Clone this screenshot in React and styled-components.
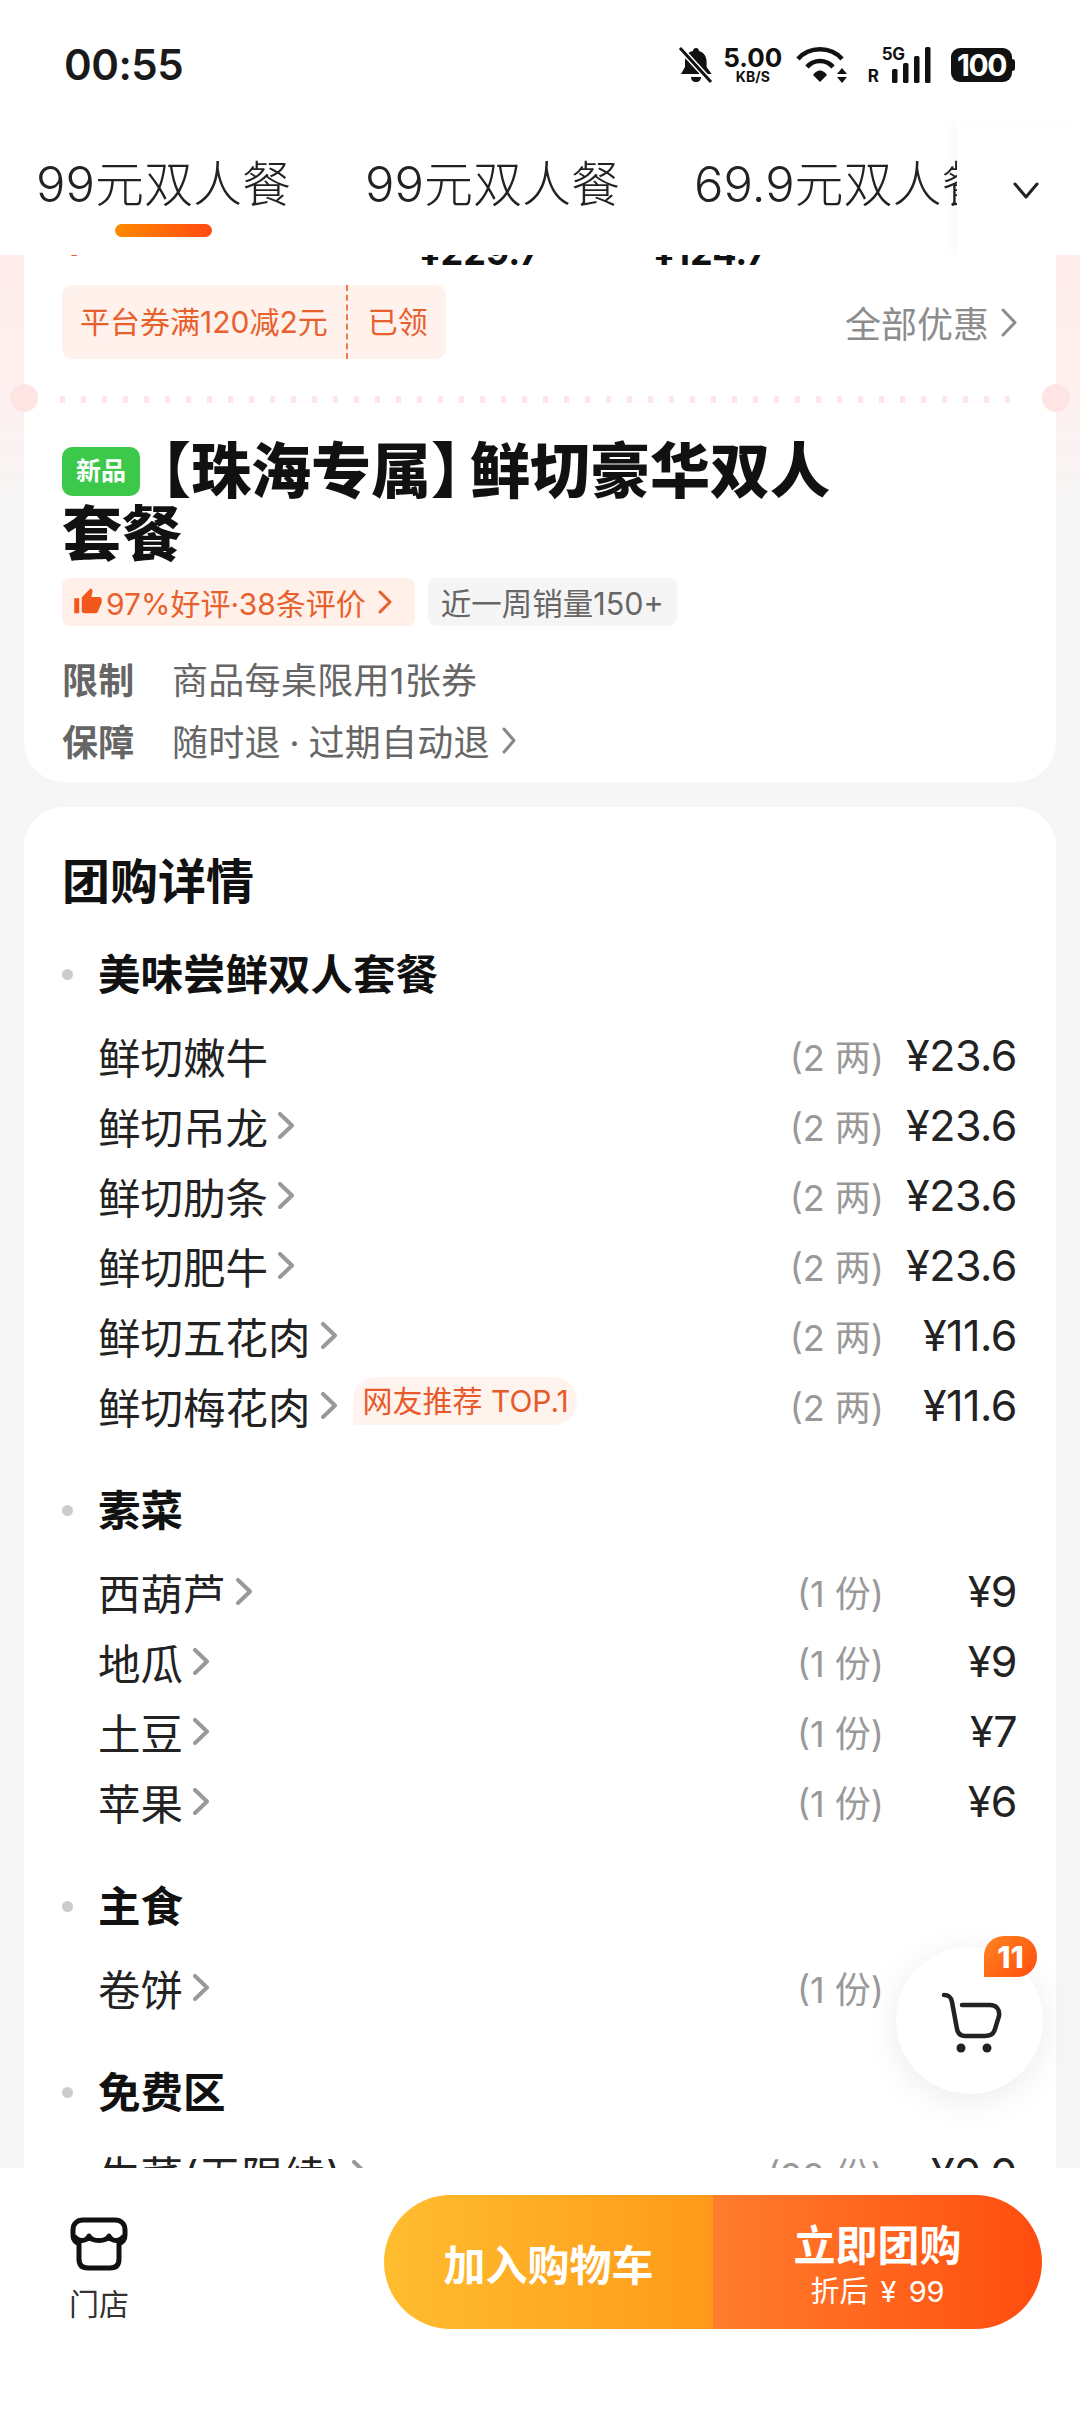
import React from 'react';
import styled, { createGlobalStyle } from 'styled-components';
import { MdThumbUp } from 'react-icons/md';

const GlobalStyle = createGlobalStyle`
  html, body {
    margin: 0;
    padding: 0;
    background: #f6f6f6;
  }
  * {
    box-sizing: border-box;
  }
`;

const Page = styled.div`
  position: relative;
  width: 1080px;
  height: 2414px;
  display: flex;
  flex-direction: column;
  overflow: hidden;
  background: #f6f6f6;
  color: #1a1a1a;
  font-family: Inter, "Noto Sans CJK SC", sans-serif;
`;

const Header = styled.header`
  flex: none;
  height: 255px;
  background: #fff;
`;

const StatusBar = styled.div`
  height: 122px;
  padding: 40px 68px 0 64px;
  display: flex;
  justify-content: space-between;
  align-items: flex-start;
`;

const Time = styled.div`
  font-weight: 600;
  font-size: 42px;
  line-height: 50px;
  letter-spacing: -0.5px;
`;

const StatusIcons = styled.div`
  height: 50px;
  display: flex;
  align-items: center;
  color: #111;
`;

const Speed = styled.div`
  width: 60px;
  margin: 0 13px 0 10px;
  display: flex;
  flex-direction: column;
  align-items: center;
  font-weight: 700;
`;

const SpeedValue = styled.span`
  font-size: 26px;
  line-height: 24px;
`;

const SpeedUnit = styled.span`
  font-size: 14px;
  line-height: 14px;
`;

const NetGroup = styled.div`
  position: relative;
  height: 36px;
  margin: 0 20px;
  display: flex;
  align-items: flex-end;
  gap: 13px;
  font-weight: 700;
`;

const RoamLabel = styled.span`
  font-size: 17px;
  line-height: 14px;
`;

const NetLabel = styled.span`
  position: absolute;
  left: 14px;
  top: 0;
  font-size: 17px;
  line-height: 15px;
  letter-spacing: -0.5px;
`;

const Battery = styled.div`
  position: relative;
  width: 61px;
  height: 34px;
  border-radius: 9px;
  background: #111;
  color: #fff;
  display: flex;
  align-items: center;
  justify-content: center;
  font-weight: 700;
  font-size: 30px;
  letter-spacing: -1.5px;

  &::after {
    content: "";
    position: absolute;
    right: -3px;
    top: 11px;
    width: 3px;
    height: 12px;
    border-radius: 0 3px 3px 0;
    background: #111;
  }
`;

const TabRow = styled.div`
  height: 133px;
  display: flex;
`;

const TabList = styled.div`
  flex: 1;
  min-width: 0;
  padding: 28px 0 0 36px;
  display: flex;
  gap: 74px;
  overflow: hidden;
`;

const Tab = styled.div`
  flex: none;
  display: flex;
  flex-direction: column;
  align-items: center;
  font-size: 49px;
  line-height: 70px;
  font-weight: 300;
  color: #222;
`;

const TabMarker = styled.div`
  width: 97px;
  height: 13px;
  margin-top: 4px;
  border-radius: 7px;
  background: linear-gradient(90deg, #ff8a00, #ff4a10);
`;

const TabMore = styled.div`
  flex: none;
  width: 123px;
  display: flex;
  align-items: center;
  justify-content: center;
  padding: 3px 0 0 14px;
  background: #fff;
  box-shadow: -6px 0 10px rgba(0, 0, 0, 0.025);
`;

const Main = styled.main`
  flex: 1;
  min-height: 0;
  padding: 0 24px;
  overflow: hidden;
  background: linear-gradient(180deg, #ffecec 0, #fff0f0 130px, #f6f6f6 262px);
`;

const DealCard = styled.section`
  position: relative;
  height: 527px;
  padding: 0 38px;
  background: #fff;
  border-radius: 0 0 40px 40px;
`;

const ClippedPrices = styled.div`
  height: 10px;
  overflow: hidden;
  display: flex;
  align-items: flex-end;
  padding-left: 2px;
  font-size: 36px;
  font-weight: 700;
`;

const ClippedPrice = styled.span`
  flex: none;
  width: ${p => p.$width}px;
  line-height: 20px;
  margin-bottom: ${p => p.$lift}px;
  color: ${p => p.$color || '#111'};
`;

const CouponRow = styled.div`
  margin-top: 20px;
  display: flex;
  align-items: center;
  justify-content: space-between;
  padding-right: 1px;
`;

const Coupon = styled.div`
  height: 74px;
  display: flex;
  align-items: stretch;
  border-radius: 10px;
  background: #fff1ec;
  color: #e8602c;
  font-size: 30px;
  line-height: 74px;
`;

const CouponText = styled.span`
  padding: 0 18px;
`;

const CouponState = styled.span`
  padding: 0 18px 0 20px;
  border-left: 2px dashed #ee7a4c;
`;

const AllOffers = styled.div`
  display: flex;
  align-items: center;
  gap: 12px;
  font-size: 36px;
  color: #8c8c8c;
`;

const Perforation = styled.div`
  height: 7px;
  margin: 37px -2px 0;
  background: repeating-linear-gradient(90deg, #ffe6e6 0 5px, transparent 5px 21px);
`;

const Notch = styled.div`
  position: absolute;
  top: 129px;
  ${p => p.$side}: -14px;
  width: 28px;
  height: 28px;
  border-radius: 50%;
  background: #ffe4e4;
`;

const Title = styled.h1`
  width: 800px;
  margin: 37px 0 0;
  font-size: 60px;
  line-height: 63px;
  font-weight: 900;
  color: #111;
`;

const OpenBracket = styled.span`
  margin-left: -9px;
`;

const CloseBracket = styled.span`
  margin-right: -21px;
`;

const NewBadge = styled.span`
  display: inline-flex;
  align-items: center;
  justify-content: center;
  width: 78px;
  height: 49px;
  border-radius: 10px;
  background: #3cc94b;
  color: #fff;
  font-size: 25px;
  line-height: 49px;
  font-weight: 700;
  vertical-align: 13px;
`;

const TagRow = styled.div`
  margin-top: 12px;
  display: flex;
  gap: 13px;
`;

const RatingTag = styled.div`
  height: 48px;
  padding: 0 23px 0 11px;
  display: flex;
  align-items: center;
  border-radius: 8px;
  background: #fff1ea;
  color: #e8602c;
  font-size: 30px;
`;

const ThumbWrap = styled.span`
  display: flex;
  margin-right: 3px;
`;

const SalesTag = styled.div`
  height: 48px;
  padding: 0 13px;
  display: flex;
  align-items: center;
  border-radius: 8px;
  background: #f5f5f5;
  color: #666;
  font-size: 30.5px;
`;

const TagArrow = styled.span`
  display: flex;
  margin-left: 12px;
`;

const InfoList = styled.div`
  margin-top: 21px;
`;

const InfoRow = styled.div`
  display: flex;
  align-items: center;
  height: 62px;
  font-size: 36px;
  letter-spacing: 0.3px;
  color: #666;
`;

const InfoLabel = styled.span`
  width: 110px;
  font-weight: 700;
  color: #666;
`;

const InfoLink = styled.span`
  display: flex;
  align-items: center;
  gap: 12px;
  word-spacing: -2px;
`;

const DetailCard = styled.section`
  margin-top: 25px;
  padding: 45px 39px 0 38px;
  background: #fff;
  border-radius: 40px 40px 0 0;
`;

const DetailTitle = styled.h2`
  margin: 0 0 32px;
  font-size: 48px;
  line-height: 60px;
  font-weight: 700;
  color: #111;
`;

const Group = styled.div`
  margin-bottom: 40px;
`;

const GroupTitle = styled.h3`
  position: relative;
  margin: 0 0 15px;
  padding: 1px 0 0 36px;
  font-size: 42.5px;
  line-height: 60px;
  font-weight: 700;
  color: #111;

  &::before {
    content: "";
    position: absolute;
    left: 0;
    top: 25px;
    width: 11px;
    height: 11px;
    border-radius: 50%;
    background: #ccc;
  }
`;

const ItemRow = styled.div`
  height: 70px;
  padding-left: 36px;
  display: grid;
  grid-template-columns: 1fr auto 133px;
  align-items: center;
`;

const ItemName = styled.div`
  display: flex;
  align-items: center;
  font-size: 42.5px;
  color: #222;
`;

const ItemArrow = styled.span`
  display: flex;
  margin-left: 10px;
`;

const ItemBadge = styled.span`
  height: 48px;
  margin: -8px 0 0 16px;
  padding: 0 8px 0 10px;
  border-radius: 24px 24px 24px 0;
  background: #fff3ee;
  color: #e85a2c;
  font-size: 30px;
  line-height: 48px;
`;

const ItemQty = styled.span`
  font-size: 36px;
  color: #999;
`;

const ItemPrice = styled.span`
  text-align: right;
  font-size: 43px;
  color: #222;
  letter-spacing: -0.5px;
`;

const CartFab = styled.div`
  position: absolute;
  left: 896px;
  top: 1947px;
  width: 147px;
  height: 147px;
  display: flex;
  align-items: center;
  justify-content: center;
  border-radius: 50%;
  background: #fff;
  box-shadow: 0 6px 36px rgba(0, 0, 0, 0.08);
`;

const CartBadge = styled.span`
  position: absolute;
  left: 88px;
  top: -11px;
  width: 53px;
  height: 41px;
  display: flex;
  align-items: center;
  justify-content: center;
  border-radius: 20px 20px 20px 0;
  background: linear-gradient(135deg, #ff8420, #ff4d0f);
  color: #fff;
  font-size: 30px;
  font-weight: 800;
`;

const Footer = styled.footer`
  position: relative;
  flex: none;
  height: 246px;
  padding: 27px 38px 0 66px;
  display: flex;
  justify-content: space-between;
  align-items: flex-start;
  background: #fff;
`;

const StoreLink = styled.div`
  margin-top: 22px;
  width: 66px;
  display: flex;
  flex-direction: column;
  align-items: center;
  gap: 15px;
  font-size: 30px;
  line-height: 36px;
  color: #333;
`;

const BuyGroup = styled.div`
  width: 658px;
  height: 134px;
  display: flex;
  border-radius: 67px;
  overflow: hidden;
  color: #fff;
`;

const AddButton = styled.div`
  flex: 1;
  display: flex;
  align-items: center;
  justify-content: center;
  background: linear-gradient(90deg, #ffbd2e, #ff9a1a);
  font-size: 42px;
  font-weight: 700;
`;

const BuyButton = styled.div`
  flex: 1;
  display: flex;
  flex-direction: column;
  align-items: center;
  justify-content: center;
  padding-top: 5px;
  background: linear-gradient(90deg, #ff7d2c, #ff4d0f);
`;

const BuyLabel = styled.span`
  font-size: 42px;
  line-height: 54px;
  font-weight: 700;
`;

const BuySub = styled.span`
  font-size: 29px;
  line-height: 38px;
  word-spacing: 4px;
`;

const Chevron = ({ w = 16, h = 27, color = '#999', stroke = 4 }) => (
  <svg width={w} height={h} viewBox={`0 0 ${w} ${h}`} fill="none">
    <path
      d={`M2 2 L${w - 2} ${h / 2} L2 ${h - 2}`}
      stroke={color}
      strokeWidth={stroke}
      strokeLinecap="round"
      strokeLinejoin="round"
    />
  </svg>
);

const ChevronDown = () => (
  <svg width="26" height="17" viewBox="0 0 26 17" fill="none">
    <path d="M2 2 L13 15 L24 2" stroke="#222" strokeWidth="3" strokeLinecap="round" strokeLinejoin="round" />
  </svg>
);

const BellOff = () => (
  <svg width="35" height="36" viewBox="0 0 35 36">
    <path
      d="M18 1c1.600 0 3 1.300 3 3 5 1.400 7.600 5.600 7.600 11v5l5 7H3l4-7v-5c0-2 .4-4 1-5.500L8 8c2-2 4-3.400 7-4 0-1.700 1.400-3 3-3z"
      fill="#111"
    />
    <path d="M13 30h10c0 3-2 5-5 5s-5-2-5-5z" fill="#111" />
    <path d="M2 1l31 34" stroke="#fff" strokeWidth="6" />
    <path d="M2 1l31 34" stroke="#111" strokeWidth="3" />
  </svg>
);

const Wifi = () => (
  <svg width="52" height="36" viewBox="0 0 52 36" fill="none">
    <path d="M2 12C13 -1 35 -1 46 12" stroke="#111" strokeWidth="4.500" />
    <path d="M11 20C18 12 30 12 37 20" stroke="#111" strokeWidth="4.500" />
    <path d="M17 28C21 22 27 22 31 28L24 35Z" fill="#111" />
    <path d="M46 21l5 6H41zM46 36l5-6H41z" fill="#111" />
  </svg>
);

const SignalBars = () => (
  <svg width="39" height="36" viewBox="0 0 39 36">
    <rect x="0" y="22" width="5.500" height="14" rx="1.500" fill="#111" />
    <rect x="11" y="16" width="5.500" height="20" rx="1.500" fill="#111" />
    <rect x="22" y="9" width="5.500" height="27" rx="1.500" fill="#111" />
    <rect x="33" y="0" width="5.500" height="36" rx="1.500" fill="#111" />
  </svg>
);

const StoreIcon = () => (
  <svg width="58" height="54" viewBox="0 0 58 54" fill="none" stroke="#111" strokeWidth="5">
    <path d="M13 3h32c6 0 10 4 10 10v5c0 4-2 7-6 9v15c0 6-3 9-9 9H18c-6 0-9-3-9-9V27c-4-2-6-5-6-9v-5C3 7 7 3 13 3z" />
    <path d="M4 19c4 6 12 6 15 0 3 6 17 6 20 0 3 6 11 6 15 0" strokeLinejoin="round" />
  </svg>
);

const CartIcon = () => (
  <svg width="66" height="66" viewBox="0 0 66 66" fill="none">
    <path
      d="M7 7C12 7 14 9 15 14L20 41C21 46 24 48 28 48H48C54 48 57 45 58 41L62 28C63 21 59 17 53 17H25"
      stroke="#222"
      strokeWidth="4.500"
      strokeLinecap="round"
    />
    <circle cx="24" cy="60" r="4.500" fill="#222" />
    <circle cx="50" cy="60" r="4.500" fill="#222" />
  </svg>
);

const groups = [
  {
    title: '美味尝鲜双人套餐',
    items: [
      { name: '鲜切嫩牛', qty: '(2 两)', price: '¥23.6', plain: true },
      { name: '鲜切吊龙', qty: '(2 两)', price: '¥23.6' },
      { name: '鲜切肋条', qty: '(2 两)', price: '¥23.6' },
      { name: '鲜切肥牛', qty: '(2 两)', price: '¥23.6' },
      { name: '鲜切五花肉', qty: '(2 两)', price: '¥11.6' },
      { name: '鲜切梅花肉', qty: '(2 两)', price: '¥11.6', badge: '网友推荐 TOP.1' },
    ],
  },
  {
    title: '素菜',
    items: [
      { name: '西葫芦', qty: '(1 份)', price: '¥9' },
      { name: '地瓜', qty: '(1 份)', price: '¥9' },
      { name: '土豆', qty: '(1 份)', price: '¥7' },
      { name: '苹果', qty: '(1 份)', price: '¥6' },
    ],
  },
  {
    title: '主食',
    items: [{ name: '卷饼', qty: '(1 份)', price: '¥5' }],
  },
  {
    title: '免费区',
    items: [{ name: '生菜(无限续)', qty: '(99 份)', price: '¥0.0' }],
  },
];

export default function App() {
  return (
    <Page>
      <GlobalStyle />
      <Header>
        <StatusBar>
          <Time>00:55</Time>
          <StatusIcons>
            <BellOff />
            <Speed>
              <SpeedValue>5.00</SpeedValue>
              <SpeedUnit>KB/S</SpeedUnit>
            </Speed>
            <Wifi />
            <NetGroup>
              <RoamLabel>R</RoamLabel>
              <NetLabel>5G</NetLabel>
              <SignalBars />
            </NetGroup>
            <Battery>100</Battery>
          </StatusIcons>
        </StatusBar>
        <TabRow>
          <TabList>
            <Tab>
              99元双人餐
              <TabMarker />
            </Tab>
            <Tab>99元双人餐</Tab>
            <Tab>69.9元双人餐</Tab>
          </TabList>
          <TabMore>
            <ChevronDown />
          </TabMore>
        </TabRow>
      </Header>

      <Main>
        <DealCard>
          <ClippedPrices>
            <ClippedPrice $width={356} $lift={12} $color="#e8602c">¥</ClippedPrice>
            <ClippedPrice $width={234} $lift={3}>¥229.7</ClippedPrice>
            <ClippedPrice $width={120} $lift={3}>¥124.7</ClippedPrice>
          </ClippedPrices>
          <CouponRow>
            <Coupon>
              <CouponText>平台券满120减2元</CouponText>
              <CouponState>已领</CouponState>
            </Coupon>
            <AllOffers>
              全部优惠
              <Chevron w={16} h={29} color="#8c8c8c" stroke={3} />
            </AllOffers>
          </CouponRow>
          <Perforation />
          <Notch $side="left" />
          <Notch $side="right" />
          <Title>
            <NewBadge>新品</NewBadge>
            <OpenBracket>【</OpenBracket>珠海专属<CloseBracket>】</CloseBracket>鲜切豪华双人套餐
          </Title>
          <TagRow>
            <RatingTag>
              <ThumbWrap>
                <MdThumbUp size={30} color="#f2581b" />
              </ThumbWrap>
              97%好评·38条评价
              <TagArrow>
                <Chevron w={14} h={24} color="#e8602c" stroke={3} />
              </TagArrow>
            </RatingTag>
            <SalesTag>近一周销量150+</SalesTag>
          </TagRow>
          <InfoList>
            <InfoRow>
              <InfoLabel>限制</InfoLabel>
              商品每桌限用1张券
            </InfoRow>
            <InfoRow>
              <InfoLabel>保障</InfoLabel>
              <InfoLink>
                随时退 · 过期自动退
                <Chevron w={14} h={27} color="#888" stroke={3} />
              </InfoLink>
            </InfoRow>
          </InfoList>
        </DealCard>

        <DetailCard>
          <DetailTitle>团购详情</DetailTitle>
          {groups.map(group => (
            <Group key={group.title}>
              <GroupTitle>{group.title}</GroupTitle>
              {group.items.map(item => (
                <ItemRow key={item.name}>
                  <ItemName>
                    {item.name}
                    {!item.plain && (
                      <ItemArrow>
                        <Chevron />
                      </ItemArrow>
                    )}
                    {item.badge && <ItemBadge>{item.badge}</ItemBadge>}
                  </ItemName>
                  <ItemQty>{item.qty}</ItemQty>
                  <ItemPrice>{item.price}</ItemPrice>
                </ItemRow>
              ))}
            </Group>
          ))}
        </DetailCard>
      </Main>

      <CartFab>
        <CartIcon />
        <CartBadge>11</CartBadge>
      </CartFab>

      <Footer>
        <StoreLink>
          <StoreIcon />
          门店
        </StoreLink>
        <BuyGroup>
          <AddButton>加入购物车</AddButton>
          <BuyButton>
            <BuyLabel>立即团购</BuyLabel>
            <BuySub>折后 ¥ 99</BuySub>
          </BuyButton>
        </BuyGroup>
      </Footer>
    </Page>
  );
}
